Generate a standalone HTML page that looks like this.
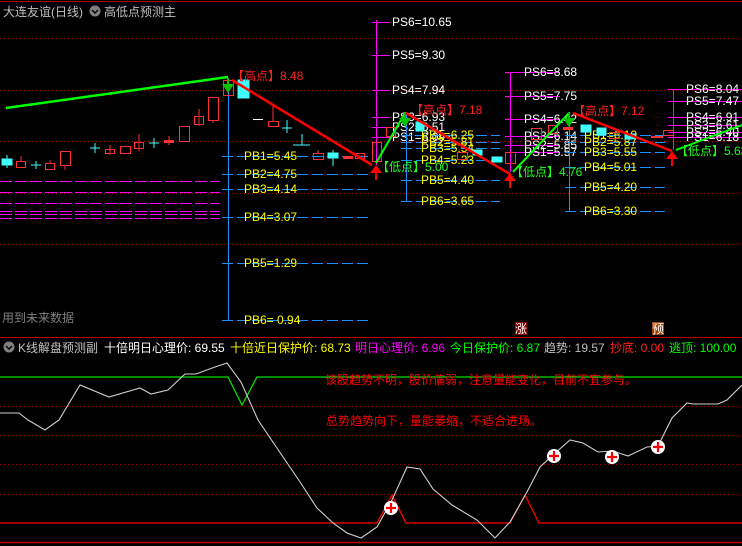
<!DOCTYPE html>
<html><head><meta charset="utf-8"><style>
html,body{margin:0;padding:0;background:#000;}
svg{display:block;}
text{font-family:"Liberation Sans","Noto Sans CJK SC",sans-serif;font-size:12px;}
</style></head><body>
<svg width="742" height="546" viewBox="0 0 742 546" xmlns="http://www.w3.org/2000/svg">
<rect width="742" height="546" fill="#000"/>
<!-- borders -->
<line x1="0" y1="1.5" x2="742" y2="1.5" stroke="#a00000" stroke-width="1"/>
<line x1="0" y1="337.5" x2="742" y2="337.5" stroke="#c00000" stroke-width="1"/>
<line x1="0" y1="542.5" x2="742" y2="542.5" stroke="#c00000" stroke-width="1.5"/>
<!-- dotted grids -->
<g stroke="#a00000" stroke-width="1" stroke-dasharray="1,3">
<line x1="0" y1="38.5" x2="742" y2="38.5"/>
<line x1="0" y1="90.5" x2="742" y2="90.5"/>
<line x1="0" y1="141.5" x2="742" y2="141.5"/>
<line x1="0" y1="193.5" x2="742" y2="193.5"/>
<line x1="0" y1="244.5" x2="742" y2="244.5"/>
<line x1="0" y1="406.5" x2="742" y2="406.5"/>
<line x1="0" y1="435.5" x2="742" y2="435.5"/>
<line x1="0" y1="464.5" x2="742" y2="464.5"/>
<line x1="0" y1="494.5" x2="742" y2="494.5"/>
</g>
<!-- titles -->
<text x="3" y="16" fill="#c0c0c0" font-size="13">大连友谊(日线)</text>
<circle cx="95" cy="11" r="5.5" fill="#808080"/><path d="M92 10 L95 13 L98 10" stroke="#000" fill="none" stroke-width="1.4"/>
<text x="104" y="16" fill="#c0c0c0" font-size="13">高低点预测主</text>
<!-- magenta dashed left -->
<g stroke="#ff00ff" stroke-width="1" stroke-dasharray="12,3">
<line x1="0" y1="181.5" x2="220" y2="181.5"/>
<line x1="0" y1="192.5" x2="220" y2="192.5"/>
<line x1="0" y1="203.5" x2="220" y2="203.5"/>
<line x1="0" y1="211.5" x2="220" y2="211.5"/>
<line x1="0" y1="214.5" x2="220" y2="214.5"/>
<line x1="0" y1="218.5" x2="220" y2="218.5"/>
</g>
<!-- group1 PB -->
<line x1="228.5" y1="86" x2="228.5" y2="320" stroke="#1e90ff"/>
<g stroke="#1e90ff" stroke-dasharray="11,4">
<line x1="222" y1="156.5" x2="368" y2="156.5"/>
<line x1="222" y1="174.5" x2="368" y2="174.5"/>
<line x1="222" y1="189.5" x2="368" y2="189.5"/>
<line x1="222" y1="217.5" x2="368" y2="217.5"/>
<line x1="222" y1="263.5" x2="368" y2="263.5"/>
<line x1="222" y1="320.5" x2="368" y2="320.5"/>
</g>
<g fill="#ffff00">
<text x="244" y="160">PB1=5.45</text><text x="244" y="178">PB2=4.75</text>
<text x="244" y="193">PB3=4.14</text><text x="244" y="221">PB4=3.07</text>
<text x="244" y="267">PB5=1.29</text><text x="244" y="324">PB6= 0.94</text>
</g>
<!-- group2 -->
<line x1="376.5" y1="20" x2="376.5" y2="165" stroke="#ff00ff"/>
<g stroke="#ff00ff"><line x1="372" y1="22.5" x2="390" y2="22.5"/><line x1="372" y1="55.5" x2="390" y2="55.5"/><line x1="372" y1="90.5" x2="390" y2="90.5"/><line x1="372" y1="117.5" x2="390" y2="117.5"/><line x1="372" y1="127.5" x2="390" y2="127.5"/><line x1="372" y1="137.5" x2="390" y2="137.5"/></g>
<g fill="#fff"><text x="392" y="26">PS6=10.65</text><text x="392" y="59">PS5=9.30</text><text x="392" y="94">PS4=7.94</text><text x="392" y="121">PS3=6.93</text><text x="392" y="131">PS2=6.51</text><text x="392" y="141">PS1=6.09</text></g>
<line x1="406.5" y1="113" x2="406.5" y2="202" stroke="#1e90ff"/>
<g stroke="#1e90ff" stroke-dasharray="11,4"><line x1="401" y1="135.5" x2="500" y2="135.5"/><line x1="401" y1="142.5" x2="500" y2="142.5"/><line x1="401" y1="148.5" x2="500" y2="148.5"/><line x1="401" y1="160.5" x2="500" y2="160.5"/><line x1="401" y1="180.5" x2="500" y2="180.5"/><line x1="401" y1="201.5" x2="500" y2="201.5"/></g>
<g fill="#ffff00"><text x="421" y="139">PB1=6.25</text><text x="421" y="146">PB2=5.81</text><text x="421" y="152">PB3=5.54</text><text x="421" y="164">PB4=5.23</text><text x="421" y="184">PB5=4.40</text><text x="421" y="205">PB6=3.65</text></g>
<!-- group3 -->
<line x1="510.5" y1="72" x2="510.5" y2="172" stroke="#ff00ff"/>
<g stroke="#ff00ff"><line x1="505" y1="72.5" x2="560" y2="72.5"/><line x1="505" y1="96.5" x2="560" y2="96.5"/><line x1="505" y1="119.5" x2="560" y2="119.5"/><line x1="505" y1="136.5" x2="560" y2="136.5"/><line x1="505" y1="145.5" x2="560" y2="145.5"/><line x1="505" y1="152.5" x2="560" y2="152.5"/></g>
<g fill="#fff"><text x="524" y="76">PS6=8.68</text><text x="524" y="100">PS5=7.75</text><text x="524" y="123">PS4=6.42</text><text x="524" y="140">PS3=6.14</text><text x="524" y="149">PS2=5.85</text><text x="524" y="156">PS1=5.57</text></g>
<line x1="569.5" y1="113" x2="569.5" y2="211" stroke="#1e90ff"/>
<g stroke="#1e90ff" stroke-dasharray="11,4"><line x1="565" y1="135.5" x2="665" y2="135.5"/><line x1="565" y1="142.5" x2="665" y2="142.5"/><line x1="565" y1="152.5" x2="665" y2="152.5"/><line x1="565" y1="167.5" x2="665" y2="167.5"/><line x1="565" y1="187.5" x2="665" y2="187.5"/><line x1="565" y1="211.5" x2="665" y2="211.5"/></g>
<g fill="#ffff00"><text x="584" y="139">PB1=6.10</text><text x="584" y="146">PB2=5.87</text><text x="584" y="156">PB3=5.55</text><text x="584" y="171">PB4=5.01</text><text x="584" y="191">PB5=4.20</text><text x="584" y="215">PB6=3.30</text></g>
<!-- group4 -->
<line x1="673.5" y1="89" x2="673.5" y2="150" stroke="#ff00ff"/>
<g stroke="#ff00ff"><line x1="668" y1="89.5" x2="742" y2="89.5"/><line x1="668" y1="101.5" x2="742" y2="101.5"/><line x1="668" y1="117.5" x2="742" y2="117.5"/><line x1="668" y1="125.5" x2="742" y2="125.5"/><line x1="668" y1="132.5" x2="742" y2="132.5"/><line x1="668" y1="137.5" x2="742" y2="137.5"/></g>
<g fill="#fff"><text x="686" y="93">PS6=8.04</text><text x="686" y="105">PS5=7.47</text><text x="686" y="121">PS4=6.91</text><text x="686" y="129">PS3=6.61</text><text x="686" y="136">PS2=6.40</text><text x="686" y="141">PS1=6.18</text></g>
<!-- candles -->
<g stroke="#ff3030" fill="none" stroke-width="1">
<rect x="16.5" y="161.5" width="9" height="6"/><line x1="21" y1="156" x2="21" y2="161"/>
<rect x="45.5" y="163.5" width="9" height="6"/><line x1="50" y1="160" x2="50" y2="163"/>
<rect x="60.5" y="151.5" width="10" height="14"/><line x1="65" y1="165" x2="65" y2="170"/>
<rect x="105.5" y="149.5" width="9" height="4"/><line x1="110" y1="145" x2="110" y2="155"/>
<rect x="120.5" y="146.5" width="10" height="7"/>
<rect x="134.5" y="142.5" width="9" height="6"/><line x1="139" y1="134" x2="139" y2="151"/>
<rect x="179.5" y="126.5" width="10" height="15"/>
<rect x="194.5" y="116.5" width="9" height="8"/><line x1="199" y1="109" x2="199" y2="126"/>
<rect x="208.5" y="97.5" width="10" height="23"/><line x1="213" y1="120" x2="213" y2="123"/>
<rect x="223.5" y="80.5" width="10" height="15"/>
<rect x="268.5" y="121.5" width="10" height="5"/><line x1="273" y1="105" x2="273" y2="121"/>
<rect x="313.5" y="153.5" width="10" height="6"/><line x1="318" y1="150" x2="318" y2="153"/>
<rect x="355.5" y="153.5" width="9" height="5"/>
<rect x="372.5" y="142.5" width="9" height="19"/>
<rect x="386.5" y="127.5" width="9" height="9"/>
<rect x="457.5" y="152.5" width="10" height="7"/>
<rect x="505.5" y="152.5" width="10" height="11"/>
<rect x="531.5" y="128.5" width="10" height="11"/>
<rect x="548.5" y="125.5" width="9" height="8"/>
<rect x="609.5" y="132.5" width="10" height="6"/>
<rect x="663.5" y="130.5" width="10" height="5"/>
</g>
<g fill="#ff3030">
<rect x="164" y="140" width="10" height="3"/><line x1="169" y1="136" x2="169" y2="145" stroke="#ff3030"/>
<rect x="343" y="156" width="10" height="3"/>
<rect x="563" y="127" width="10" height="3"/>
<rect x="651" y="136" width="12" height="2"/>
</g>
<g fill="#40ffff" stroke="#40ffff">
<rect x="2" y="159" width="10" height="6"/><line x1="7" y1="155" x2="7" y2="168"/>
<rect x="238" y="80" width="11" height="18"/>
<rect x="328" y="153" width="10" height="5"/><line x1="333" y1="150" x2="333" y2="166"/>
<rect x="416" y="122" width="8" height="9"/>
<rect x="473" y="150" width="9" height="5"/>
<rect x="492" y="157" width="10" height="5"/>
<rect x="581" y="125" width="10" height="7"/>
<rect x="597" y="128" width="9" height="7"/>
<rect x="625" y="134" width="10" height="5"/>
</g>
<g stroke="#40ffff">
<path d="M31 165 H41 M36 161 V169"/><path d="M90 148 H100 M95 143 V153"/><path d="M149 143 H159 M154 138 V148"/>
<path d="M282 128 H292 M287 120 V133"/><path d="M293 145 H310 M302 134 V145"/>
</g>
<line x1="253" y1="119.5" x2="263" y2="119.5" stroke="#fff"/>
<!-- trend lines -->
<path d="M6 108 L228 77" stroke="#00ff00" stroke-width="2.5" fill="none"/>
<path d="M232 80 L372 165" stroke="#ff0000" stroke-width="2.5" fill="none"/>
<path d="M376 163 L405 113" stroke="#00ff00" stroke-width="2" fill="none"/>
<path d="M406 113 L510 174" stroke="#ff0000" stroke-width="2.5" fill="none"/>
<path d="M513 172 L569 113" stroke="#00ff00" stroke-width="2" fill="none"/>
<path d="M573 113 L672 151" stroke="#ff0000" stroke-width="2.5" fill="none"/>
<path d="M676 150 L742 125" stroke="#00ff00" stroke-width="2" fill="none"/>
<!-- arrows -->
<g fill="#00c000"><path d="M222 84 H234 L228 93 Z"/><rect x="227" y="78" width="2" height="7"/>
<path d="M399 118 H411 L405 127 Z"/><rect x="404" y="112" width="2" height="7"/>
<path d="M563 118 H575 L569 127 Z"/><rect x="568" y="112" width="2" height="7"/></g>
<g fill="#ff0000"><path d="M370 173 H382 L376 165 Z"/><rect x="375" y="172" width="2" height="8"/>
<path d="M504 181 H516 L510 173 Z"/><rect x="509" y="180" width="2" height="8"/>
<path d="M666 159 H678 L672 151 Z"/><rect x="671" y="158" width="2" height="8"/></g>
<!-- point labels -->
<g fill="#ff2020"><text x="232" y="80">【高点】8.48</text><text x="411" y="114">【高点】7.18</text><text x="573" y="115">【高点】7.12</text></g>
<g fill="#20ff20"><text x="377" y="171">【低点】5.00</text><text x="511" y="176">【低点】4.76</text><text x="676" y="155">【低点】5.63</text></g>
<text x="2" y="322" fill="#808080">用到未来数据</text>
<rect x="515" y="322" width="12" height="13" fill="#800000"/><text x="515" y="333" fill="#fff">涨</text>
<rect x="652" y="322" width="12" height="13" fill="#a04000"/><text x="652" y="333" fill="#fff">预</text>
<!-- lower panel title -->
<circle cx="9" cy="347" r="5.5" fill="#808080"/><path d="M6 346 L9 349 L12 346" stroke="#000" fill="none" stroke-width="1.4"/>
<text x="18" y="352" fill="#c0c0c0">K线解盘预测副</text>
<text x="104" y="352" fill="#fff">十倍明日心理价: 69.55</text>
<text x="230" y="352" fill="#ffff00">十倍近日保护价: 68.73</text>
<text x="355" y="352" fill="#ff00ff">明日心理价: 6.96</text>
<text x="450" y="352" fill="#00ff00">今日保护价: 6.87</text>
<text x="544" y="352" fill="#c0c0c0">趋势: 19.57</text>
<text x="610" y="352" fill="#ff2020">抄底: 0.00</text>
<text x="669" y="352" fill="#00ff00">逃顶: 100.00</text>
<!-- lower lines -->
<path d="M0 377 H228 L242 405 L257 377 H742" stroke="#00e000" stroke-width="1.3" fill="none"/>
<path d="M0 523 H377 L392 495 L406 523 H510 L525 495 L539 523 H742" stroke="#ff0000" stroke-width="1.3" fill="none"/>
<path d="M0 413 L19 413 L28 420 L45 430 L59 420 L80 385 L109 397 L140 388 L151 394 L168 390 L185 374 L196 374 L215 367 L227 363 L241 382 L258 420 L300 482 L317 508 L333 523 L347 533 L361 538 L377 527 L392 500 L407 467 L420 469 L433 489 L452 505 L477 520 L495 538 L510 522 L527 492 L540 467 L553 455 L570 440 L583 443 L598 452 L613 451 L628 456 L647 447 L658 446 L672 418 L687 403 L693 404 L718 404 L727 400 L742 385" stroke="#d0d0d0" stroke-width="1.1" fill="none"/>
<g>
<circle cx="391" cy="508" r="7" fill="#fff"/><path d="M386 508 H396 M391 503 V513" stroke="#ff0000" stroke-width="2.2"/>
<circle cx="554" cy="456" r="7" fill="#fff"/><path d="M549 456 H559 M554 451 V461" stroke="#ff0000" stroke-width="2.2"/>
<circle cx="612" cy="457" r="7" fill="#fff"/><path d="M607 457 H617 M612 452 V462" stroke="#ff0000" stroke-width="2.2"/>
<circle cx="658" cy="447" r="7" fill="#fff"/><path d="M653 447 H663 M658 442 V452" stroke="#ff0000" stroke-width="2.2"/>
</g>
<text x="325" y="384" fill="#ff0000">该股趋势不明，股价偏弱，注意量能变化，目前不宜参与。</text>
<text x="326" y="425" fill="#ff0000">总势趋势向下，量能萎缩，不适合进场。</text>
</svg>
</body></html>
